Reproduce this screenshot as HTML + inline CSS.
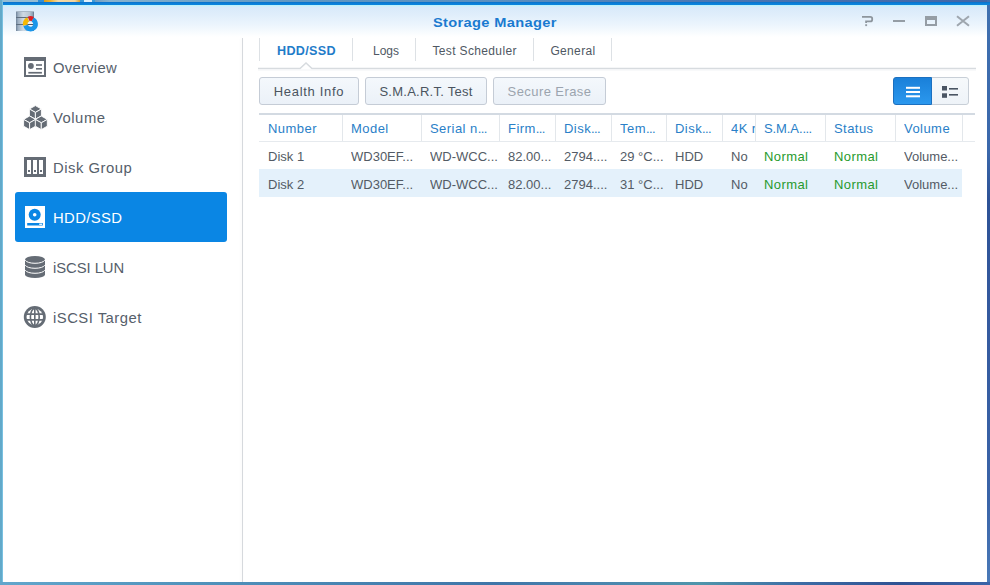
<!DOCTYPE html>
<html><head><meta charset="utf-8">
<style>
*{margin:0;padding:0;box-sizing:border-box}
html,body{width:990px;height:585px;overflow:hidden}
body{position:relative;background:#fff;font-family:"Liberation Sans",sans-serif}
div,svg{position:absolute}
#deskT{left:0;top:0;width:990px;height:2px;background:linear-gradient(90deg,#93bcd3 0,#93bcd3 38px,#2f8fd4 38px,#2f8fd4 44px,#d99a1a 44px,#e8b030 50px,#f3d9a6 58px,#f0d4a0 75px,#d9a030 80px,#3a9ad8 80px,#3a9ad8 84px,#dfeef8 84px,#dfeef8 92px,#3a9ad8 92px,#3a9ad8 95px,#6f9cc0 95px,#86b2cf 110px,#6fa4c9 200px,#5f97c2 300px,#5a90c0 500px,#4a78b4 700px,#3f66a8 990px)}
#deskL{left:0;top:0;width:3px;height:585px;background:linear-gradient(90deg,#62a9c9 0,#62a9c9 2px,#78c0e0 2px)}
#deskR{left:987px;top:0;width:3px;height:585px;background:linear-gradient(#3f70b0 0,#3b68ab 150px,#2d5296 200px,#34599e 300px,#3a64a8 500px,#4a7ab8 585px)}
#deskB{left:0;top:582px;width:990px;height:3px;background:linear-gradient(90deg,#62a6cc 0,#5092bb 200px,#3f75a8 495px,#4a85ae 600px,#4f95ab 700px,#3d6ca5 800px,#2f5293 900px,#3a64a8 990px)}
#topbar{left:3px;top:2px;width:987px;height:3px;background:linear-gradient(#0a70c8,#0a7fd8 50%,#0b86de)}
#title{left:3px;top:5px;width:984px;height:32px;background:linear-gradient(#b8f0fb 0,#c4f2fb 1px,#d8eafa 2px,#e0eefb 10px,#ecf5fd 20px,#f7fbfe 27px,#fff 32px)}
#ttext{left:433px;top:15.7px;font-size:13px;line-height:13px;font-weight:bold;color:#1a7ad0;letter-spacing:0.3px;white-space:nowrap;transform:scaleX(1.125);transform-origin:0 0}
.side{left:15px;width:212px;height:50px}
.stext{left:38.1px;top:18.6px;font-size:14px;line-height:14px;letter-spacing:0.4px;color:#56606b;white-space:nowrap;transform:scaleX(1.06);transform-origin:0 0}
#sb{left:241.5px;top:38px;width:1.5px;height:544px;background:#d6d9dd;box-shadow:-1px 0 3px rgba(0,0,0,0.05)}
.tabsep{top:38px;width:1px;height:23px;background:#dde1e5}
.tab{top:44.8px;font-size:12px;line-height:12px;color:#4f5863;white-space:nowrap;letter-spacing:0.35px}
.btn{top:77px;height:28px;border:1px solid #c5ccd6;border-radius:3px;background:linear-gradient(#f4f8fc,#ebf1f8)}
.btn span{position:absolute;top:6.8px;left:0;width:100%;text-align:center;font-size:13px;line-height:13px;color:#4a5460;letter-spacing:0.5px;white-space:nowrap}
.hd{height:14px;font-size:13px;line-height:13px;color:#2a80c8;white-space:nowrap;overflow:hidden;letter-spacing:0.45px}
.csep{top:115px;width:1px;height:26px;background:#e3e7eb}
.cell{height:14px;font-size:13px;line-height:13px;color:#535b65;white-space:nowrap;overflow:hidden}
.g{color:#279a2d;letter-spacing:0.4px}
</style></head><body>
<div id="deskT"></div>
<div id="deskL"></div>
<div id="deskR"></div>
<div id="deskB"></div>
<div id="topbar"></div>
<div id="title"></div>
<!-- app icon -->
<svg style="left:0;top:0" width="50" height="40" viewBox="0 0 50 40">
  <defs><linearGradient id="cyl" x1="0" x2="1"><stop offset="0" stop-color="#6f8399"/><stop offset="0.12" stop-color="#9fb0c2"/><stop offset="0.4" stop-color="#cfdae4"/><stop offset="0.75" stop-color="#b9c7d4"/><stop offset="0.92" stop-color="#8da0b4"/><stop offset="1" stop-color="#5f7389"/></linearGradient></defs>
  <rect x="16" y="11" width="18" height="20" fill="url(#cyl)"/>
  <rect x="16" y="11" width="18" height="1" fill="#a9b8c7"/>
  <rect x="16" y="17" width="18" height="1" fill="#5f6f80"/>
  <rect x="16" y="24" width="18" height="1" fill="#5f6f80"/>
  <circle cx="30.55" cy="24.1" r="2.9" fill="#eef3f8"/>
  <rect x="27.5" y="24" width="6" height="1" fill="#4a5868"/>
  <path d="M32.74 19.61A5.0 5.0 0 1 1 25.70 25.31" fill="none" stroke="#1a96ea" stroke-width="4.7"/>
  <path d="M25.25 25.09A5.0 5.0 0 0 1 28.07 19.31" fill="none" stroke="#f7b800" stroke-width="4.7"/>
  <path d="M28.70 18.86A5.0 5.0 0 0 1 32.76 19.01" fill="none" stroke="#dc1f26" stroke-width="4.7"/>
</svg>
<div id="ttext">Storage Manager</div>
<!-- window controls -->
<svg style="left:855px;top:10px" width="120" height="20" viewBox="0 0 120 20">
  <g fill="#959da5">
    <path d="M7 6.9H15.3Q17.2 6.9 17.2 8.8V9.4Q17.2 11.4 15.3 11.4H11.1V13" fill="none" stroke="#8d959d" stroke-width="1.8"/>
    <rect x="10.2" y="14.2" width="1.9" height="1.9"/>
    <rect x="38" y="10" width="12" height="2"/>
    <path d="M70 6h12v10H70z M72 10v4h8v-4z" fill-rule="evenodd"/>
  </g>
  <path d="M102 6.2l12 9.6M114 6.2l-12 9.6" stroke="#9ea6ae" stroke-width="2"/>
</svg>

<!-- sidebar -->
<div id="sb"></div>
<div class="side" style="top:42px">
  <svg style="left:0;top:0" width="40" height="50" viewBox="0 0 40 50">
    <g transform="translate(9,15)" fill="#656c75">
      <path d="M0 0h22v20H0z M2 4v14h18V4z" fill-rule="evenodd"/>
      <circle cx="6.9" cy="9" r="2.9"/>
      <rect x="12" y="7.2" width="6" height="1.6"/>
      <rect x="12" y="11" width="6" height="1.6"/>
      <rect x="4.3" y="14.9" width="13.6" height="1.7"/>
    </g>
  </svg>
  <div class="stext" style="letter-spacing:0.24px">Overview</div>
</div>
<div class="side" style="top:92px">
  <svg style="left:0;top:0" width="40" height="50" viewBox="0 0 40 50">
    <g transform="translate(-15,-92)" fill="#656c75" stroke="#fff" stroke-width="0.9" stroke-linejoin="round">
      <path d="M35.4 105.6L29.4 109L35.4 112.4L41.4 109Z"/>
      <path d="M29.4 109L35.4 112.4V119.2L29.4 115.8Z"/>
      <path d="M41.4 109L35.4 112.4V119.2L41.4 115.8Z"/>
      <path d="M29.6 116L23.6 119.4L29.6 122.8L35.6 119.4Z"/>
      <path d="M23.6 119.4L29.6 122.8V129.6L23.6 126.2Z"/>
      <path d="M35.6 119.4L29.6 122.8V129.6L35.6 126.2Z"/>
      <path d="M41.3 116L35.3 119.4L41.3 122.8L47.3 119.4Z"/>
      <path d="M35.3 119.4L41.3 122.8V129.6L35.3 126.2Z"/>
      <path d="M47.3 119.4L41.3 122.8V129.6L47.3 126.2Z"/>
    </g>
  </svg>
  <div class="stext" style="letter-spacing:0.47px">Volume</div>
</div>
<div class="side" style="top:142px">
  <svg style="left:0;top:0" width="40" height="50" viewBox="0 0 40 50">
    <g transform="translate(9,15)">
      <path d="M0 0h22v20H0z" fill="#656c75"/>
      <rect x="3" y="3" width="4" height="14" fill="#fff"/>
      <rect x="9" y="3" width="4" height="14" fill="#fff"/>
      <rect x="15" y="3" width="4" height="14" fill="#fff"/>
      <rect x="4" y="13" width="2" height="2" fill="#656c75"/>
      <rect x="10" y="13" width="2" height="2" fill="#656c75"/>
      <rect x="16" y="13" width="2" height="2" fill="#656c75"/>
    </g>
  </svg>
  <div class="stext" style="letter-spacing:0.47px">Disk Group</div>
</div>
<div class="side" style="top:192px;height:49.5px;background:#0a86e4;border-radius:3px">
  <svg style="left:0;top:0" width="40" height="50" viewBox="0 0 40 50">
    <g transform="translate(10,14)">
      <rect x="0" y="0" width="20" height="22" fill="#fff"/>
      <circle cx="9.7" cy="8.8" r="6" fill="#0a86e4"/>
      <circle cx="9.7" cy="8.8" r="1.8" fill="#fff"/>
      <rect x="2.2" y="17" width="15.6" height="2.5" fill="#0a86e4"/>
      <rect x="14.2" y="17.6" width="2.8" height="1.3" fill="#fff"/>
    </g>
  </svg>
  <div class="stext" style="color:#fff;letter-spacing:0.36px">HDD/SSD</div>
</div>
<div class="side" style="top:242px">
  <svg style="left:0;top:0" width="40" height="50" viewBox="0 0 40 50">
    <g transform="translate(10,14)">
      <path d="M0 3.6A10 3.6 0 0 1 20 3.6V18.4A10 3.6 0 0 1 0 18.4Z" fill="#656c75"/>
      <path d="M0.3 4.2A9.8 3.6 0 0 0 19.7 4.2M0.3 9.2A9.8 3.6 0 0 0 19.7 9.2M0.3 14.2A9.8 3.6 0 0 0 19.7 14.2" fill="none" stroke="#fff" stroke-width="1"/>
    </g>
  </svg>
  <div class="stext" style="letter-spacing:-0.06px">iSCSI LUN</div>
</div>
<div class="side" style="top:292px">
  <svg style="left:0;top:0" width="40" height="50" viewBox="0 0 40 50">
    <g transform="translate(19.8,25)">
      <circle r="11" fill="#656c75"/>
      <circle r="8.3" fill="#fff"/>
      <g fill="none" stroke="#656c75" stroke-width="1.6">
        <path d="M0 -9V9"/>
        <ellipse rx="4.4" ry="8.6"/>
        <path d="M-9 -2.9H9M-9 2.9H9"/>
      </g>
    </g>
  </svg>
  <div class="stext" style="letter-spacing:0.45px">iSCSI Target</div>
</div>

<!-- tabs -->
<div class="tabsep" style="left:259px"></div>
<div class="tabsep" style="left:352px"></div>
<div class="tabsep" style="left:415px"></div>
<div class="tabsep" style="left:533px"></div>
<div class="tabsep" style="left:611px"></div>
<div class="tab" style="left:276.5px;font-weight:bold;color:#1f7cc9;letter-spacing:0.3px;transform:scaleX(1.05);transform-origin:0 0">HDD/SSD</div>
<div class="tab" style="left:373px;letter-spacing:0">Logs</div>
<div class="tab" style="left:432.5px">Test Scheduler</div>
<div class="tab" style="left:550.4px">General</div>
<svg style="left:258px;top:60px" width="718" height="12" viewBox="0 0 718 12">
  <path d="M0 8.5H42L48 3L54 8.5H718" fill="none" stroke="#d7dbdf" stroke-width="1.5"/>
  <path d="M0 10H718" stroke="#f2f4f6" stroke-width="1"/>
</svg>

<!-- buttons -->
<div class="btn" style="left:259px;width:100px"><span style="letter-spacing:0.7px">Health Info</span></div>
<div class="btn" style="left:365px;width:122px"><span style="letter-spacing:0.25px">S.M.A.R.T. Test</span></div>
<div class="btn" style="left:493px;width:113px"><span style="color:#9ba4ae;letter-spacing:0.42px">Secure Erase</span></div>
<!-- view toggle -->
<div style="left:893px;top:77px;width:76px;height:28px;border:1px solid #c8cfd7;border-radius:3px;background:linear-gradient(#f6f9fb,#eef3f8)"></div>
<div style="left:893px;top:77px;width:39px;height:28px;background:linear-gradient(#1a80d9,#2b98ee);border:1px solid #1b70c0;border-radius:3px 0 0 3px"></div>
<svg style="left:893px;top:77px" width="76" height="28" viewBox="0 0 76 28">
  <rect x="13" y="9.8" width="14" height="2" fill="#fff"/>
  <rect x="13" y="14" width="14" height="2" fill="#fff"/>
  <rect x="13" y="18.3" width="14" height="2" fill="#fff"/>
  <rect x="49" y="9" width="5" height="4.5" fill="#4a5563"/>
  <rect x="49" y="16.3" width="5" height="4.5" fill="#4a5563"/>
  <rect x="56" y="11" width="9" height="1.6" fill="#4a5563"/>
  <rect x="56" y="17" width="9" height="1.6" fill="#4a5563"/>
</svg>

<!-- table -->
<div style="left:259px;top:113px;width:716px;height:2px;background:#d3dae2"></div>
<div style="left:259px;top:141px;width:716px;height:1px;background:#e6eaee"></div>
<div style="left:259px;top:169px;width:703px;height:28px;background:#e4f1fb"></div>
<div class="hd" style="left:268px;top:122px;width:74px">Number</div>
<div class="hd" style="left:351px;top:122px;width:70px">Model</div>
<div class="hd" style="left:430px;top:122px;width:69px">Serial n<span style="letter-spacing:-0.6px">...</span></div>
<div class="hd" style="left:508px;top:122px;width:47px">Firm<span style="letter-spacing:-0.6px">...</span></div>
<div class="hd" style="left:564px;top:122px;width:47px">Disk<span style="letter-spacing:-0.6px">...</span></div>
<div class="hd" style="left:620px;top:122px;width:46px">Tem<span style="letter-spacing:-0.6px">...</span></div>
<div class="hd" style="left:675px;top:122px;width:47px">Disk<span style="letter-spacing:-0.6px">...</span></div>
<div class="hd" style="left:731px;top:122px;width:24px">4K r</div>
<div class="hd" style="left:764px;top:122px;width:61px;letter-spacing:-0.1px">S.M.A.<span style="letter-spacing:-0.6px">...</span></div>
<div class="hd" style="left:834px;top:122px;width:61px">Status</div>
<div class="hd" style="left:904px;top:122px;width:58px">Volume</div>
<div class="csep" style="left:342px"></div>
<div class="csep" style="left:421px"></div>
<div class="csep" style="left:499px"></div>
<div class="csep" style="left:555px"></div>
<div class="csep" style="left:611px"></div>
<div class="csep" style="left:666px"></div>
<div class="csep" style="left:722px"></div>
<div class="csep" style="left:755px"></div>
<div class="csep" style="left:825px"></div>
<div class="csep" style="left:895px"></div>
<div class="csep" style="left:962px"></div>
<div class="cell" style="left:268px;top:150px;width:74px">Disk 1</div>
<div class="cell" style="left:351px;top:150px;width:70px">WD30EF...</div>
<div class="cell" style="left:430px;top:150px;width:69px">WD-WCC...</div>
<div class="cell" style="left:508px;top:150px;width:47px">82.00...</div>
<div class="cell" style="left:564px;top:150px;width:47px">2794....</div>
<div class="cell" style="left:620px;top:150px;width:46px">29 °C...</div>
<div class="cell" style="left:675px;top:150px;width:47px">HDD</div>
<div class="cell" style="left:731px;top:150px;width:24px">No</div>
<div class="cell g" style="left:764px;top:150px;width:61px">Normal</div>
<div class="cell g" style="left:834px;top:150px;width:61px">Normal</div>
<div class="cell" style="left:904px;top:150px;width:58px">Volume...</div>
<div class="cell" style="left:268px;top:177.5px;width:74px">Disk 2</div>
<div class="cell" style="left:351px;top:177.5px;width:70px">WD30EF...</div>
<div class="cell" style="left:430px;top:177.5px;width:69px">WD-WCC...</div>
<div class="cell" style="left:508px;top:177.5px;width:47px">82.00...</div>
<div class="cell" style="left:564px;top:177.5px;width:47px">2794....</div>
<div class="cell" style="left:620px;top:177.5px;width:46px">31 °C...</div>
<div class="cell" style="left:675px;top:177.5px;width:47px">HDD</div>
<div class="cell" style="left:731px;top:177.5px;width:24px">No</div>
<div class="cell g" style="left:764px;top:177.5px;width:61px">Normal</div>
<div class="cell g" style="left:834px;top:177.5px;width:61px">Normal</div>
<div class="cell" style="left:904px;top:177.5px;width:58px">Volume...</div>
</body></html>
